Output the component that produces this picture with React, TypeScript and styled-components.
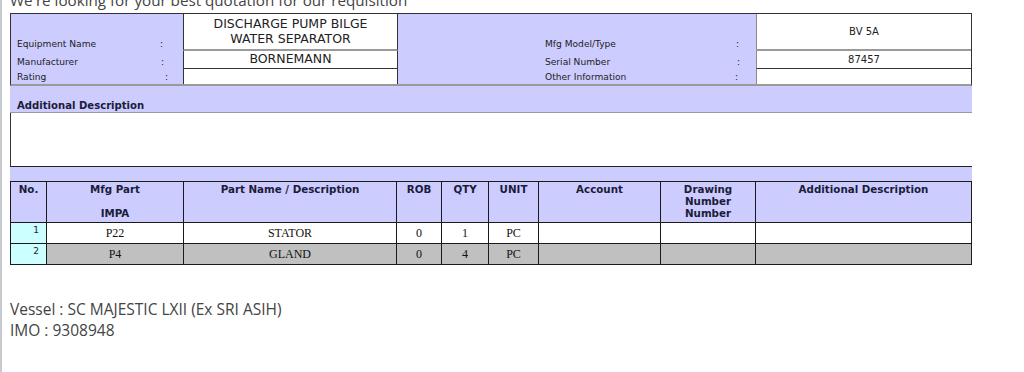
import React from "react";
import styled, { createGlobalStyle } from "styled-components";

const LAV = "#ccccff";
const VERDANA = `"DejaVu Sans", Verdana, sans-serif`;
const SERIF = `"Liberation Serif", "Times New Roman", serif`;
const OPEN = `"Open Sans", "Noto Sans", sans-serif`;

const GlobalStyle = createGlobalStyle`
  html, body { margin: 0; padding: 0; background: #fff; }
  body { overflow: hidden; }
  * { box-sizing: border-box; }
`;

const Page = styled.div`
  min-height: 372px;
  border-left: 2px solid #c6cacf;
  padding-left: 8px;
  display: flex;
  flex-direction: column;
`;

const Intro = styled.p`
  margin: -10px 0 2px;
  font: 15.2px/21px ${OPEN};
  color: #444;
  white-space: nowrap;
`;

const Sheet = styled.div`
  width: 962px;
  display: flex;
  flex-direction: column;
`;

const InfoGrid = styled.div`
  display: grid;
  grid-template-columns: 172px 215px 358px 215px;
  grid-template-rows: 37px 18px 15px;
  border: 1px solid #333;
  border-bottom: 2px solid #9a9a9a;
  background: ${LAV};
  font-family: ${VERDANA};
  color: #222;
`;

const LabelCell = styled.div<{ $pad: number }>`
  display: flex;
  align-items: flex-end;
  padding-left: ${(p) => p.$pad}px;
  padding-bottom: 1px;
  font-size: 9.1px;
  line-height: 11px;
  white-space: nowrap;
`;

const Label = styled.span<{ $w: number }>`
  width: ${(p) => p.$w}px;
  flex-shrink: 0;
`;

const Colon = styled.span<{ $shift: number }>`
  margin-left: ${(p) => p.$shift}px;
`;

type Edge = "gray" | "dark" | "none";

const ValueCell = styled.div<{ $bottom: Edge; $size: number; $last?: boolean }>`
  display: flex;
  align-items: center;
  justify-content: center;
  text-align: center;
  background: #fff;
  font-size: ${(p) => p.$size}px;
  line-height: ${(p) => (p.$size > 11 ? 14.4 : 12)}px;
  border-left: 1px solid ${(p) => (p.$last ? "#8a8a8a" : "#333")};
  border-right: ${(p) => (p.$last ? "none" : "1px solid #333")};
  border-bottom: ${(p) =>
    p.$bottom === "gray" ? "2px solid #9a9a9a" : p.$bottom === "dark" ? "1px solid #333" : "none"};
  padding: 0 6px;
`;

const DescHeader = styled.div`
  height: 27px;
  background: ${LAV};
  border-bottom: 1px solid #9a9a9a;
  display: flex;
  align-items: flex-end;
  padding-left: 7px;
  font: bold 10.1px/12px ${VERDANA};
  color: #1c1c3a;
`;

const DescBox = styled.div`
  height: 54px;
  background: #fff;
  border-left: 1px solid #333;
  border-bottom: 1px solid #222;
`;

const Strip = styled.div`
  height: 14px;
  background: ${LAV};
`;

const PartsGrid = styled.div`
  display: grid;
  grid-template-columns: 36px 137px 213px 45px 47px 50px 122px 95px 216px;
  grid-template-rows: 41px 21px 21px;
  border-top: 1px solid #1a1a1a;
  border-left: 1px solid #1a1a1a;
`;

const HeadCell = styled.div`
  background: ${LAV};
  border-right: 1px solid #1a1a1a;
  border-bottom: 1px solid #1a1a1a;
  padding-top: 1px;
  text-align: center;
  font: bold 10.3px/12px ${VERDANA};
  color: #1c1c3a;
`;

const NoCell = styled.div`
  background: #ccffff;
  border-right: 1px solid #1a1a1a;
  border-bottom: 1px solid #1a1a1a;
  text-align: right;
  padding: 2px 7px 0 0;
  font: 9px/10px ${VERDANA};
  color: #222;
`;

const BodyCell = styled.div<{ $shade: boolean }>`
  background: ${(p) => (p.$shade ? "#c0c0c0" : "#fff")};
  border-right: 1px solid #1a1a1a;
  border-bottom: 1px solid #1a1a1a;
  display: flex;
  align-items: center;
  justify-content: center;
  font: 12px/14px ${SERIF};
  color: #111;
`;

const Footer = styled.div`
  margin-top: 34px;
  font: 15.5px/21px ${OPEN};
  color: #444;
`;

const FooterLine = styled.div`
  white-space: nowrap;
`;

const leftLabels = [
  { text: "Equipment Name", shift: 0 },
  { text: "Manufacturer", shift: 1 },
  { text: "Rating", shift: 5 },
];
const midLabels = [
  { text: "Mfg Model/Type", shift: 0 },
  { text: "Serial Number", shift: 1 },
  { text: "Other Information", shift: -1 },
];
const leftValues = [
  <>DISCHARGE PUMP BILGE<br />WATER SEPARATOR</>,
  <>BORNEMANN</>,
  <></>,
];
const rightValues = ["BV 5A", "87457", ""];
const edges: Edge[] = ["gray", "dark", "none"];

const headers: React.ReactNode[] = [
  "No.",
  <>Mfg Part<br /><br />IMPA</>,
  "Part Name / Description",
  "ROB",
  "QTY",
  "UNIT",
  "Account",
  <>Drawing<br />Number<br />Number</>,
  "Additional Description",
];

const parts = [
  { no: 1, mfg: "P22", name: "STATOR", rob: "0", qty: "1", unit: "PC" },
  { no: 2, mfg: "P4", name: "GLAND", rob: "0", qty: "4", unit: "PC" },
];

export default function App() {
  return (
    <>
      <GlobalStyle />
      <Page>
        <Intro>We're looking for your best quotation for our requisition</Intro>
        <Sheet>
          <InfoGrid>
            {[0, 1, 2].map((i) => (
              <React.Fragment key={i}>
                <LabelCell $pad={6}>
                  <Label $w={143}>{leftLabels[i].text}</Label>
                  <Colon $shift={leftLabels[i].shift}>:</Colon>
                </LabelCell>
                <ValueCell $bottom={edges[i]} $size={12.5}>
                  {leftValues[i]}
                </ValueCell>
                <LabelCell $pad={147}>
                  <Label $w={191}>{midLabels[i].text}</Label>
                  <Colon $shift={midLabels[i].shift}>:</Colon>
                </LabelCell>
                <ValueCell $bottom={edges[i]} $size={10} $last>
                  {rightValues[i]}
                </ValueCell>
              </React.Fragment>
            ))}
          </InfoGrid>
          <DescHeader>Additional Description</DescHeader>
          <DescBox />
          <Strip />
          <PartsGrid>
            {headers.map((h, i) => (
              <HeadCell key={i}>{h}</HeadCell>
            ))}
            {parts.map((p, r) => (
              <React.Fragment key={p.no}>
                <NoCell>{p.no}</NoCell>
                <BodyCell $shade={r % 2 === 1}>{p.mfg}</BodyCell>
                <BodyCell $shade={r % 2 === 1}>{p.name}</BodyCell>
                <BodyCell $shade={r % 2 === 1}>{p.rob}</BodyCell>
                <BodyCell $shade={r % 2 === 1}>{p.qty}</BodyCell>
                <BodyCell $shade={r % 2 === 1}>{p.unit}</BodyCell>
                <BodyCell $shade={r % 2 === 1} />
                <BodyCell $shade={r % 2 === 1} />
                <BodyCell $shade={r % 2 === 1} />
              </React.Fragment>
            ))}
          </PartsGrid>
        </Sheet>
        <Footer>
          <FooterLine>Vessel : SC MAJESTIC LXII (Ex SRI ASIH)</FooterLine>
          <FooterLine>IMO : 9308948</FooterLine>
        </Footer>
      </Page>
    </>
  );
}
